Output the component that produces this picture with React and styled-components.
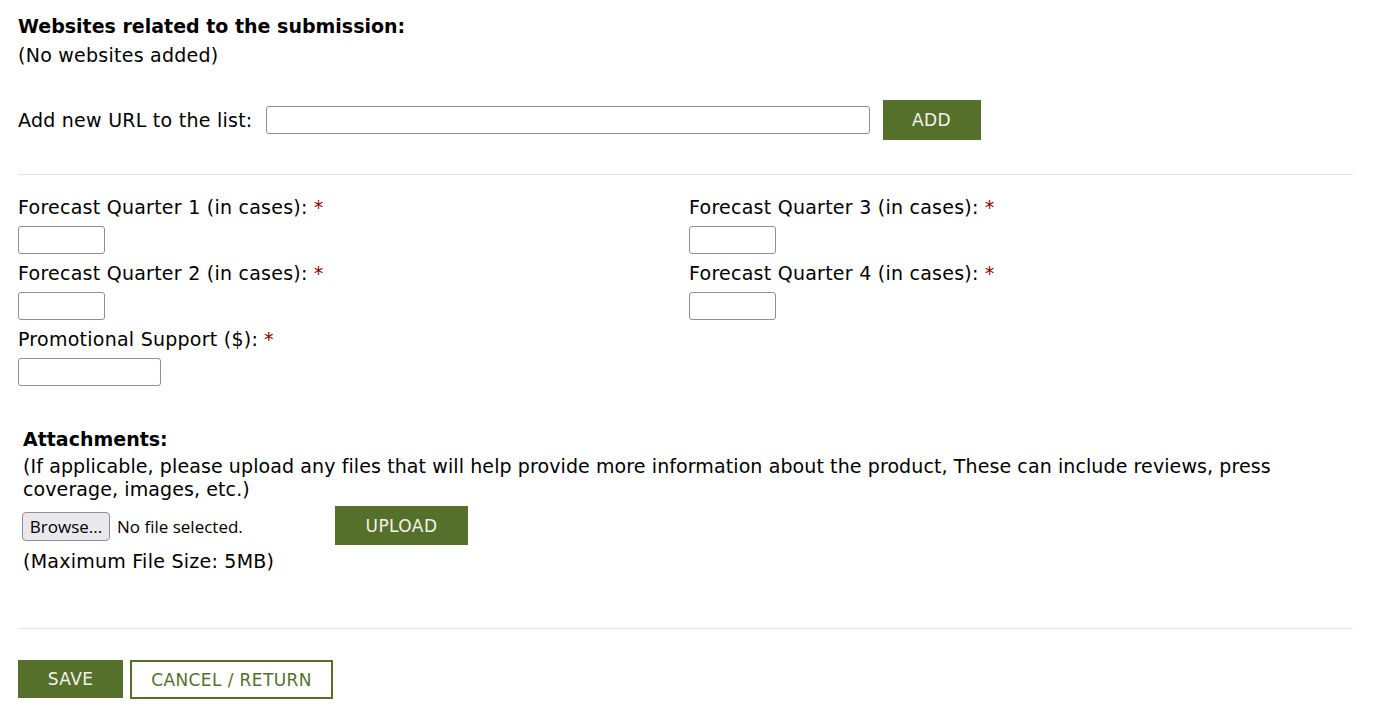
import styled, { createGlobalStyle } from 'styled-components';

const Global = createGlobalStyle`
  body {
    margin: 0;
    background: #fff;
    color: #000;
    font-family: "DejaVu Sans", Verdana, sans-serif;
    font-size: 19px;
    letter-spacing: 0.25px;
  }
`;

const green = '#55702b';

const Page = styled.div`
  padding: 14px 27px 0 18px;
`;

const Heading = styled.div`
  font-weight: bold;
  line-height: 24px;
  letter-spacing: 0;
`;

const Text = styled.div`
  line-height: ${(p) => p.$lh || '24px'};
  margin-top: ${(p) => p.$mt || 0}px;
  letter-spacing: ${(p) => p.$ls || '0.25px'};
`;

const UrlRow = styled.div`
  display: flex;
  align-items: center;
  margin-top: 33px;
`;

const UrlLabel = styled.label`
  margin-right: 13px;
`;

const TextInput = styled.input`
  box-sizing: border-box;
  width: ${(p) => p.$w}px;
  height: 28px;
  border: 1px solid #8f8f8f;
  border-radius: 3px;
  padding: 2px 6px;
  font-size: 15px;
  display: block;
`;

const Button = styled.button`
  box-sizing: border-box;
  background: ${(p) => (p.$outline ? '#fff' : green)};
  color: ${(p) => (p.$outline ? green : '#f2f2ea')};
  border: ${(p) => (p.$outline ? `2px solid ${green}` : 'none')};
  font-family: "DejaVu Sans", Verdana, sans-serif;
  font-size: 17px;
  letter-spacing: 0.4px;
  text-transform: uppercase;
  height: ${(p) => p.$h || 40}px;
  width: ${(p) => p.$w}px;
  margin-left: ${(p) => p.$ml || 0}px;
  padding: 0;
  cursor: pointer;
`;

const Rule = styled.hr`
  border: none;
  border-top: 1px solid #e3e3e3;
  margin: ${(p) => p.$m};
`;

const Grid = styled.div`
  display: grid;
  grid-template-columns: 671px 1fr;
  align-items: start;
`;

const Column = styled.div`
  display: flex;
  flex-direction: column;
`;

const Field = styled.div`
  display: flex;
  flex-direction: column;
  gap: 7px;
  margin-bottom: 7px;
`;

const Label = styled.label`
  line-height: 24px;
`;

const Req = styled.span`
  color: #8b0000;
  margin-left: 6px;
`;

const Attachments = styled.div`
  padding: 0 20px 0 5px;
  margin-top: 34px;
`;

const FileRow = styled.div`
  display: flex;
  align-items: center;
  margin-top: 5px;
`;

const Browse = styled.span`
  box-sizing: border-box;
  display: inline-flex;
  align-items: center;
  justify-content: center;
  width: 88px;
  height: 29px;
  margin: 1px 0 0 -1px;
  border: 1px solid #8f8f8f;
  border-radius: 4px;
  background: #e9e9ed;
  font-family: "Open Sans", "Liberation Sans", sans-serif;
  font-size: 17px;
  letter-spacing: 0;
`;

const FileName = styled.span`
  font-family: "Open Sans", "Liberation Sans", sans-serif;
  font-size: 17px;
  letter-spacing: 0;
  margin: 1px 0 0 7px;
  width: 218px;
`;

const Actions = styled.div`
  display: flex;
  gap: 7px;
`;

const FieldBox = ({ label, w }) => (
  <Field>
    <Label>
      {label}
      <Req>*</Req>
    </Label>
    <TextInput $w={w} />
  </Field>
);

export default function App() {
  return (
    <Page>
      <Global />
      <Heading>Websites related to the submission:</Heading>
      <Text $mt={5}>(No websites added)</Text>
      <UrlRow>
        <UrlLabel>Add new URL to the list:</UrlLabel>
        <TextInput $w={604} />
        <Button $w={98} $ml={13}>Add</Button>
      </UrlRow>
      <Rule $m="34px 0 20px" />
      <Grid>
        <Column>
          <FieldBox label="Forecast Quarter 1 (in cases):" w={87} />
          <FieldBox label="Forecast Quarter 2 (in cases):" w={87} />
          <FieldBox label="Promotional Support ($):" w={143} />
        </Column>
        <Column>
          <FieldBox label="Forecast Quarter 3 (in cases):" w={87} />
          <FieldBox label="Forecast Quarter 4 (in cases):" w={87} />
        </Column>
      </Grid>
      <Attachments>
        <Heading>Attachments:</Heading>
        <Text $lh="23px" $mt={4} $ls="0.1px">
          (If applicable, please upload any files that will help provide more information about the product, These can include reviews, press coverage, images, etc.)
        </Text>
        <FileRow>
          <Browse>Browse...</Browse>
          <FileName>No file selected.</FileName>
          <Button $w={133} $h={39}>Upload</Button>
        </FileRow>
        <Text $mt={4}>(Maximum File Size: 5MB)</Text>
      </Attachments>
      <Rule $m="55px 0 31px" />
      <Actions>
        <Button $w={105} $h={38}>Save</Button>
        <Button $outline $w={203} $h={39}>Cancel / Return</Button>
      </Actions>
    </Page>
  );
}
